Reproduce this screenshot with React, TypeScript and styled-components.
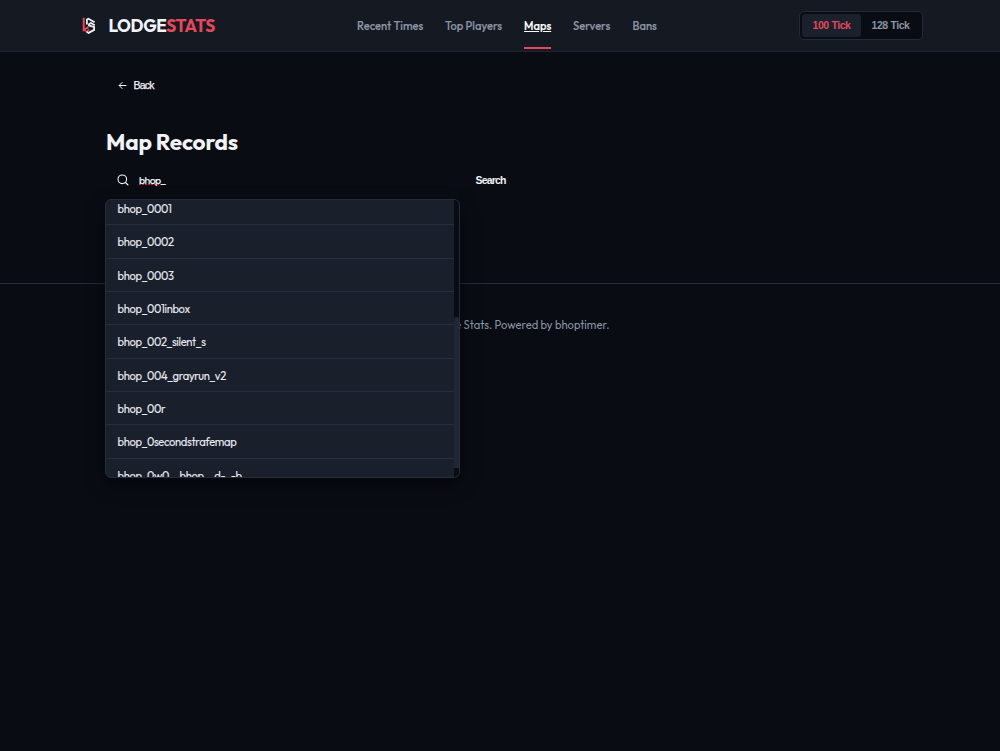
import React from "react";
import styled, { createGlobalStyle } from "styled-components";

const brandFont = `"Outfit", "Lato", sans-serif`;

const GlobalStyle = createGlobalStyle`
  * { box-sizing: border-box; }
  body { margin: 0; background: #090c13; color: #f1f3f7; font-family: ${brandFont}; overflow: hidden; }
  button, input { font: inherit; color: inherit; background: none; border: 0; padding: 0; margin: 0; outline: 0; }
`;

const Page = styled.div`
  min-height: 751px;
`;

const Header = styled.header`
  display: flex;
  align-items: center;
  justify-content: space-between;
  height: 52px;
  padding: 0 77px 0 81px;
  background: #151922;
  border-bottom: 1px solid #1d2532;
`;

const Brand = styled.a`
  display: flex;
  align-items: center;
  gap: 11.5px;
  width: 276px;
`;

const Wordmark = styled.span`
  padding-top: 1px;
  font-size: 17.2px;
  line-height: 20px;
  font-weight: 700;
  letter-spacing: -0.36px;
  white-space: nowrap;
`;

const Accent = styled.span`
  color: #e4485a;
`;

const Nav = styled.nav`
  display: flex;
  gap: 22px;
  height: 51px;
  flex: 1;
`;

const NavLink = styled.a<{ $active?: boolean; $width: number }>`
  width: ${(p) => p.$width}px;
  height: 49px;
  padding-top: 19px;
  font-size: 11.2px;
  line-height: 14px;
  font-weight: 500;
  -webkit-text-stroke: 0.15px currentColor;
  white-space: nowrap;
  color: ${(p) => (p.$active ? "#ffffff" : "#8a94a4")};
  text-decoration: ${(p) => (p.$active ? "underline" : "none")};
  border-bottom: 2px solid ${(p) => (p.$active ? "#e4485a" : "transparent")};
`;

const TickSwitch = styled.div`
  display: flex;
  width: 124px;
  height: 29px;
  padding: 2px;
  background: #090c13;
  border: 1px solid #252a38;
  border-radius: 5px;
`;

const TickButton = styled.button<{ $active?: boolean }>`
  width: 59px;
  height: 23px;
  padding-bottom: 1px;
  border-radius: 3px;
  font-family: "Liberation Sans", sans-serif;
  font-size: 10.5px;
  letter-spacing: -0.5px;
  word-spacing: 0.5px;
  font-weight: 700;
  background: ${(p) => (p.$active ? "#1b202d" : "transparent")};
  color: ${(p) => (p.$active ? "#e4485a" : "#8a94a4")};
`;

const Main = styled.main`
  height: 231px;
  padding: 25px 106px 0;
`;

const BackButton = styled.button`
  display: flex;
  align-items: center;
  gap: 6.5px;
  height: 16px;
  margin-left: 12px;
  font-family: "Liberation Sans", sans-serif;
  font-size: 10.5px;
  -webkit-text-stroke: 0.25px currentColor;
  letter-spacing: -0.8px;
`;

const Title = styled.h1`
  margin: 34.5px 0 0;
  font-size: 22.6px;
  line-height: 28px;
  font-weight: 750;
  letter-spacing: -0.2px;
  white-space: nowrap;
`;

const SearchRow = styled.form`
  position: relative;
  display: flex;
  align-items: center;
  height: 28px;
  margin-top: 10.5px;
`;

const SearchIconBox = styled.span`
  display: flex;
  width: 33px;
  padding-left: 11px;
`;

const SearchInput = styled.div`
  width: 336.5px;
  padding-bottom: 1px;
  font-size: 10.5px;
  line-height: 14px;
  letter-spacing: -0.6px;
  -webkit-text-stroke: 0.15px currentColor;
`;

const Typed = styled.span`
  display: inline-block;
  height: 12px;
  line-height: 14px;
  background: repeating-linear-gradient(90deg, #d01a27 0 2px, transparent 2px 3px) 0 100% / 21px 1px no-repeat;
`;

const SearchButton = styled.button`
  font-family: "Liberation Sans", sans-serif;
  font-size: 10.5px;
  font-weight: 700;
  letter-spacing: -0.8px;
`;

const Dropdown = styled.div`
  position: absolute;
  top: 33px;
  left: -1px;
  z-index: 2;
  display: flex;
  width: 355px;
  height: 279px;
  border: 1px solid #252b3a;
  border-radius: 6px;
  background: #1a1f2c;
  box-shadow: 0 7px 17px rgba(0, 0, 0, 0.5);
  overflow: hidden;
`;

const Results = styled.div`
  width: 348px;
  flex: none;
  overflow: hidden;
`;

const Result = styled.div`
  height: 33.35px;
  padding: 10px 11.5px 0;
  border-bottom: 1px solid #272d3d;
  font-size: 11.2px;
  line-height: 14px;
  letter-spacing: -0.34px;
  color: #e6e9ef;
  -webkit-text-stroke: 0.1px currentColor;
  white-space: nowrap;
  &:first-child { margin-top: -8px; }
`;

const Scrollbar = styled.div`
  display: flex;
  flex-direction: column;
  width: 5px;
  padding-top: 117px;
  background: #090c13;
`;

const Thumb = styled.div`
  height: 151px;
  border-radius: 3px 3px 0 0;
  background: #202634;
`;

const Footer = styled.footer`
  display: flex;
  justify-content: center;
  border-top: 1px solid #252a36;
  padding-top: 34px;
  font-size: 11.2px;
  line-height: 14px;
  color: #8a94a4;
`;

const FooterText = styled.span`
  width: 219px;
  display: flex;
  justify-content: flex-end;
  white-space: nowrap;
`;

const Logo = () => (
  <svg width="16" height="18" viewBox="0 0 16 18" fill="none" strokeWidth="2">
    <path d="M2.7 .8V13L7.4 10.2" stroke="#e4485a" />
    <path d="M2.2 12.6l3.2 1.9 3-1.8" stroke="#e4485a" strokeWidth="1.4" />
    <path d="M5.9 7.4V2.6L7.4 1.7 13.6 5.2" stroke="#eef0f5" strokeWidth="1.8" />
    <path d="M13.8 8.2L10 6 8 7.3v1.3l5.1 1.3v3L7.6 15.9l-2-1.2" stroke="#eef0f5" strokeWidth="1.8" />
  </svg>
);

const ArrowLeft = () => (
  <svg width="9" height="9" viewBox="0 0 9 9" fill="none" stroke="#f1f3f7" strokeWidth="1">
    <path d="M8.4 4.5H1M4.4 1.2L1.1 4.5l3.3 3.3" />
  </svg>
);

const Magnifier = () => (
  <svg width="12" height="12" viewBox="0 0 12 12" fill="none" stroke="#f1f3f7" strokeWidth="1.1" strokeLinecap="round">
    <circle cx="5.3" cy="5.3" r="4.3" />
    <path d="M8.5 8.5l2.5 2.5" />
  </svg>
);

const links = [
  { label: "Recent Times", width: 66 },
  { label: "Top Players", width: 57 },
  { label: "Maps", width: 27, active: true },
  { label: "Servers", width: 37.5 },
  { label: "Bans", width: 25 },
];

const maps = [
  "bhop_0001",
  "bhop_0002",
  "bhop_0003",
  "bhop_001inbox",
  "bhop_002_silent_s",
  "bhop_004_grayrun_v2",
  "bhop_00r",
  "bhop_0secondstrafemap",
  "bhop_0w0__bhop__d-_-b",
];

export default function App() {
  return (
    <Page>
      <GlobalStyle />
      <Header>
        <Brand>
          <Logo />
          <Wordmark>LODGE<Accent>STATS</Accent></Wordmark>
        </Brand>
        <Nav>
          {links.map((l) => (
            <NavLink key={l.label} $active={l.active} $width={l.width}>{l.label}</NavLink>
          ))}
        </Nav>
        <TickSwitch>
          <TickButton $active>100 Tick</TickButton>
          <TickButton>128 Tick</TickButton>
        </TickSwitch>
      </Header>
      <Main>
        <BackButton><ArrowLeft />Back</BackButton>
        <Title>Map Records</Title>
        <SearchRow>
          <SearchIconBox><Magnifier /></SearchIconBox>
          <SearchInput><Typed>bhop_</Typed></SearchInput>
          <SearchButton type="button">Search</SearchButton>
          <Dropdown>
            <Results>
              {maps.map((name) => <Result key={name}>{name}</Result>)}
            </Results>
            <Scrollbar><Thumb /></Scrollbar>
          </Dropdown>
        </SearchRow>
      </Main>
      <Footer><FooterText>© 2026 Lodge Stats. Powered by bhoptimer.</FooterText></Footer>
    </Page>
  );
}
